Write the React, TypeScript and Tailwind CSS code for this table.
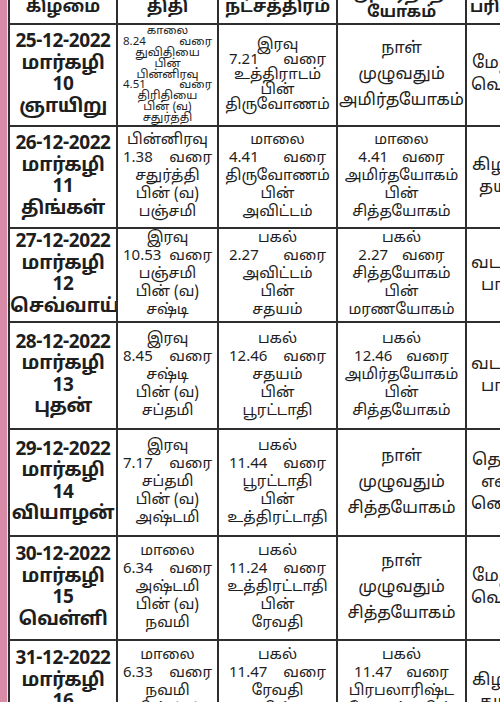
import React from 'react';

type Row = {
  day: string[];
  h: number;
  thithi: string[];
  thithiSmall?: boolean;
  star: string[];
  starTight?: boolean;
  yogam: string[];
  yogamBig?: boolean;
  pari: [string, number][];
};

const rows: Row[] = [
  {
    day: ['25-12-2022', 'மார்கழி', '10', 'ஞாயிறு'],
    h: 102,
    thithi: ['காலை', '8.24 வரை', 'துவிதியை', 'பின்', 'பின்னிரவு', '4.51 வரை', 'திரிதியை', 'பின் (வ)', 'சதுர்த்தி'],
    thithiSmall: true,
    star: ['இரவு', '7.21 வரை', 'உத்திராடம்', 'பின்', 'திருவோணம்'],
    starTight: true,
    yogam: ['நாள்', 'முழுவதும்', 'அமிர்தயோகம்'],
    yogamBig: true,
    pari: [['மேற்கு', 5], ['வெல்லம்', 4]],
  },
  {
    day: ['26-12-2022', 'மார்கழி', '11', 'திங்கள்'],
    h: 102,
    thithi: ['பின்னிரவு', '1.38 வரை', 'சதுர்த்தி', 'பின் (வ)', 'பஞ்சமி'],
    star: ['மாலை', '4.41 வரை', 'திருவோணம்', 'பின்', 'அவிட்டம்'],
    yogam: ['மாலை', '4.41 வரை', 'அமிர்தயோகம்', 'பின்', 'சித்தயோகம்'],
    pari: [['கிழக்கு', 5], ['தயிர்', 12]],
  },
  {
    day: ['27-12-2022', 'மார்கழி', '12', 'செவ்வாய்'],
    h: 94,
    thithi: ['இரவு', '10.53 வரை', 'பஞ்சமி', 'பின் (வ)', 'சஷ்டி'],
    star: ['பகல்', '2.27 வரை', 'அவிட்டம்', 'பின்', 'சதயம்'],
    yogam: ['பகல்', '2.27 வரை', 'சித்தயோகம்', 'பின்', 'மரணயோகம்'],
    pari: [['வடக்கு', 4], ['பால்', 14]],
  },
  {
    day: ['28-12-2022', 'மார்கழி', '13', 'புதன்'],
    h: 107,
    thithi: ['இரவு', '8.45 வரை', 'சஷ்டி', 'பின் (வ)', 'சப்தமி'],
    star: ['பகல்', '12.46 வரை', 'சதயம்', 'பின்', 'பூரட்டாதி'],
    yogam: ['பகல்', '12.46 வரை', 'அமிர்தயோகம்', 'பின்', 'சித்தயோகம்'],
    pari: [['வடக்கு', 4], ['பால்', 14]],
  },
  {
    day: ['29-12-2022', 'மார்கழி', '14', 'வியாழன்'],
    h: 107,
    thithi: ['இரவு', '7.17 வரை', 'சப்தமி', 'பின் (வ)', 'அஷ்டமி'],
    star: ['பகல்', '11.44 வரை', 'பூரட்டாதி', 'பின்', 'உத்திரட்டாதி'],
    yogam: ['நாள்', 'முழுவதும்', 'சித்தயோகம்'],
    yogamBig: true,
    pari: [['தெற்கு', 5], ['எண்', 14], ['ணெய்', 4]],
  },
  {
    day: ['30-12-2022', 'மார்கழி', '15', 'வெள்ளி'],
    h: 104,
    thithi: ['மாலை', '6.34 வரை', 'அஷ்டமி', 'பின் (வ)', 'நவமி'],
    star: ['பகல்', '11.24 வரை', 'உத்திரட்டாதி', 'பின்', 'ரேவதி'],
    yogam: ['நாள்', 'முழுவதும்', 'சித்தயோகம்'],
    yogamBig: true,
    pari: [['மேற்கு', 5], ['வெல்லம்', 4]],
  },
  {
    day: ['31-12-2022', 'மார்கழி', '16', 'சனி'],
    h: 104,
    thithi: ['மாலை', '6.33 வரை', 'நவமி', 'பின் (வ)', 'தசமி'],
    star: ['பகல்', '11.47 வரை', 'ரேவதி', 'பின்', 'அசுவினி'],
    yogam: ['பகல்', '11.47 வரை', 'பிரபலாரிஷ்ட', 'யோகம் பின்', 'சித்தயோகம்'],
    pari: [['கிழக்கு', 5], ['தயிர்', 12]],
  },
];

const font = { fontFamily: '"Noto Sans Tamil", "Lohit Tamil", Latha, "Noto Sans", "Liberation Sans", sans-serif' };

// lines with a time spread out across the cell, like the printed sheet
function Lines({ lines, className, spread }: { lines: string[]; className: string; spread?: string }) {
  return (
    <div className={className}>
      {lines.map((l, i) =>
        spread && l.includes('வரை') ? (
          <div key={i} className={`flex justify-between ${spread}`}>
            {l.split(' ').map((w, j) => (
              <span key={j}>{w}</span>
            ))}
          </div>
        ) : (
          <div key={i} className="whitespace-nowrap">{l}</div>
        )
      )}
    </div>
  );
}

const cell = 'border-2 border-[#2e2e2e] text-center align-middle p-0 overflow-hidden';
const head = 'border-2 border-[#2e2e2e] text-center align-bottom p-0 overflow-hidden h-[37px] font-bold';

export default function App() {
  return (
    <div className="w-[500px] h-[702px] overflow-hidden bg-white flex" style={font}>
      <div className="w-[7px] shrink-0 bg-[#d98aa7]" />
      <div className="w-[1px] shrink-0 bg-[#f1e6ea]" />
      <div className="shrink-0 -mt-[14px]">
        <table className="border-collapse table-fixed w-[521px] text-[#1e1e1e]">
          <colgroup>
            <col className="w-[108px]" />
            <col className="w-[101px]" />
            <col className="w-[119px]" />
            <col className="w-[129px]" />
            <col className="w-[64px]" />
          </colgroup>
          <thead>
            <tr>
              <th className={`${head} pb-[5px] text-[17px] leading-[20px]`}>கிழமை</th>
              <th className={`${head} pb-[5px] text-[17px] leading-[20px]`}>திதி</th>
              <th className={`${head} pb-[5px] text-[17px] leading-[20px]`}>நட்சத்திரம்</th>
              <th className={`${head} pb-[1px] text-[16px] leading-[17px]`}>
                <div>அமிர்தாதி</div>
                <div>யோகம்</div>
              </th>
              <th className={`${head} pb-[5px] text-[16px] leading-[20px] !text-left pl-[3px]`}>
                <span className="whitespace-nowrap">பரிகாரம்</span>
              </th>
            </tr>
          </thead>
          <tbody>
            {rows.map((r) => (
              <tr key={r.day[0]}>
                <td className={cell} style={{ height: r.h }}>
                  <Lines
                    lines={r.day}
                    className="text-[19px] font-bold leading-[21.5px] tracking-[-0.4px]"
                  />
                </td>
                <td className={cell}>
                  <Lines
                    lines={r.thithi}
                    spread="px-[5px]"
                    className={r.thithiSmall ? 'text-[11.5px] leading-[10.8px]' : 'text-[15px] leading-[18px]'}
                  />
                </td>
                <td className={cell}>
                  <Lines
                    lines={r.star}
                    spread="px-[10px]"
                    className={r.starTight ? 'text-[15px] leading-[15px]' : 'text-[15px] leading-[18px]'}
                  />
                </td>
                <td className={cell}>
                  <Lines
                    lines={r.yogam}
                    className={r.yogamBig ? 'text-[16.5px] leading-[26px]' : 'text-[15px] leading-[18px] [word-spacing:10px]'}
                  />
                </td>
                <td className={cell}>
                  <div className="text-left text-[17px] leading-[22px]">
                    {r.pari.map(([t, pad]) => (
                      <div key={t} className="whitespace-nowrap" style={{ paddingLeft: pad }}>
                        {t}
                      </div>
                    ))}
                  </div>
                </td>
              </tr>
            ))}
          </tbody>
        </table>
      </div>
    </div>
  );
}
